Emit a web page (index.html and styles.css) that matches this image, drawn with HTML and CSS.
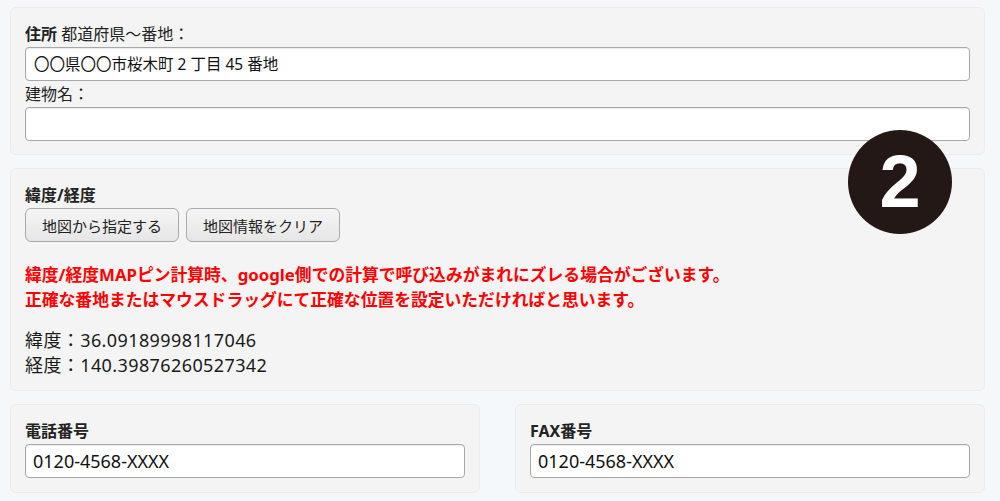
FILE: index.html
```html
<!DOCTYPE html>
<html lang="ja">
<head>
<meta charset="utf-8">
<link rel="stylesheet" href="styles.css">
</head>
<body>
<div class="page">
  <section class="panel panel-address">
    <div class="label"><b>住所</b> 都道府県〜番地：</div>
    <div class="input input-address">〇〇県〇〇市桜木町 2 丁目 45 番地</div>
    <div class="label">建物名：</div>
    <div class="input input-address"></div>
  </section>

  <section class="panel panel-geo">
    <div class="label"><b>緯度/経度</b></div>
    <div class="buttons">
      <button class="btn">地図から指定する</button>
      <button class="btn">地図情報をクリア</button>
    </div>
    <p class="warn">緯度/経度MAPピン計算時、google側での計算で呼び込みがまれにズレる場合がございます。<br>正確な番地またはマウスドラッグにて正確な位置を設定いただければと思います。</p>
    <div class="coords">
      <div>緯度：36.09189998117046</div>
      <div>経度：140.39876260527342</div>
    </div>
  </section>

  <div class="row">
    <section class="panel panel-small">
      <div class="label"><b>電話番号</b></div>
      <div class="input input-phone">0120-4568-XXXX</div>
    </section>
    <section class="panel panel-small">
      <div class="label"><b>FAX番号</b></div>
      <div class="input input-phone">0120-4568-XXXX</div>
    </section>
  </div>

  <div class="badge">2</div>
</div>
</body>
</html>
```

FILE: styles.css
```css
* { box-sizing: border-box; }
html, body { margin: 0; padding: 0; }
body {
  background: #f5f8fb;
  font-family: "Noto Sans", "Noto Sans CJK JP", sans-serif;
  color: #222;
  font-size: 16px;
}
.page {
  position: relative;
  padding: 7px 15px 0 10px;
  display: flex;
  flex-direction: column;
  gap: 13px;
}
.panel {
  background: #f4f4f4;
  border: 1px solid #ececec;
  border-radius: 6px;
}
.panel-address { padding: 16px 14px 13px 14px; }
.panel-geo { padding: 16px 14px 12px 14px; }
.panel-small { padding: 16px 14px 14px 14px; }
.label {
  line-height: 20px;
  font-size: 16px;
  margin-bottom: 3px;
}
.label b { font-weight: 700; }
.input {
  height: 34px;
  background: #fff;
  border: 1px solid #a8a8a8;
  border-radius: 4px;
  box-shadow: inset 0 1px 1px rgba(0,0,0,0.08);
  padding: 0 8px;
  line-height: 32px;
  color: #111;
}
.input-address { font-size: 15.5px; margin-bottom: 3px; }
.panel-address .input:last-child { margin-bottom: 0; }
.input-phone { font-size: 18px; padding-left: 7px; }
.buttons {
  display: flex;
  gap: 7px;
}
.btn {
  height: 34px;
  padding: 0 16px;
  font-family: "Noto Sans", "Noto Sans CJK JP", sans-serif;
  font-size: 15px;
  color: #222;
  border: 1px solid #a9a9a9;
  border-radius: 6px;
  background: linear-gradient(#f5f5f5, #e6e6e6);
}
.warn {
  margin: 20px 0 0 0;
  color: #ff0000;
  font-weight: 700;
  font-size: 16.8px;
  line-height: 25px;
}
.coords {
  margin-top: 16px;
  line-height: 25px;
  font-size: 18px;
  letter-spacing: 0.4px;
  color: #1a1a1a;
}
.row {
  display: grid;
  grid-template-columns: 1fr 1fr;
  gap: 35px;
}
.badge {
  position: absolute;
  left: 848px;
  top: 130px;
  width: 104px;
  height: 104px;
  border-radius: 50%;
  background: #231815;
  color: #fff;
  font-family: "Liberation Sans", Arial, sans-serif;
  font-weight: 700;
  font-size: 74px;
  line-height: 104px;
  text-align: center;
}
```
